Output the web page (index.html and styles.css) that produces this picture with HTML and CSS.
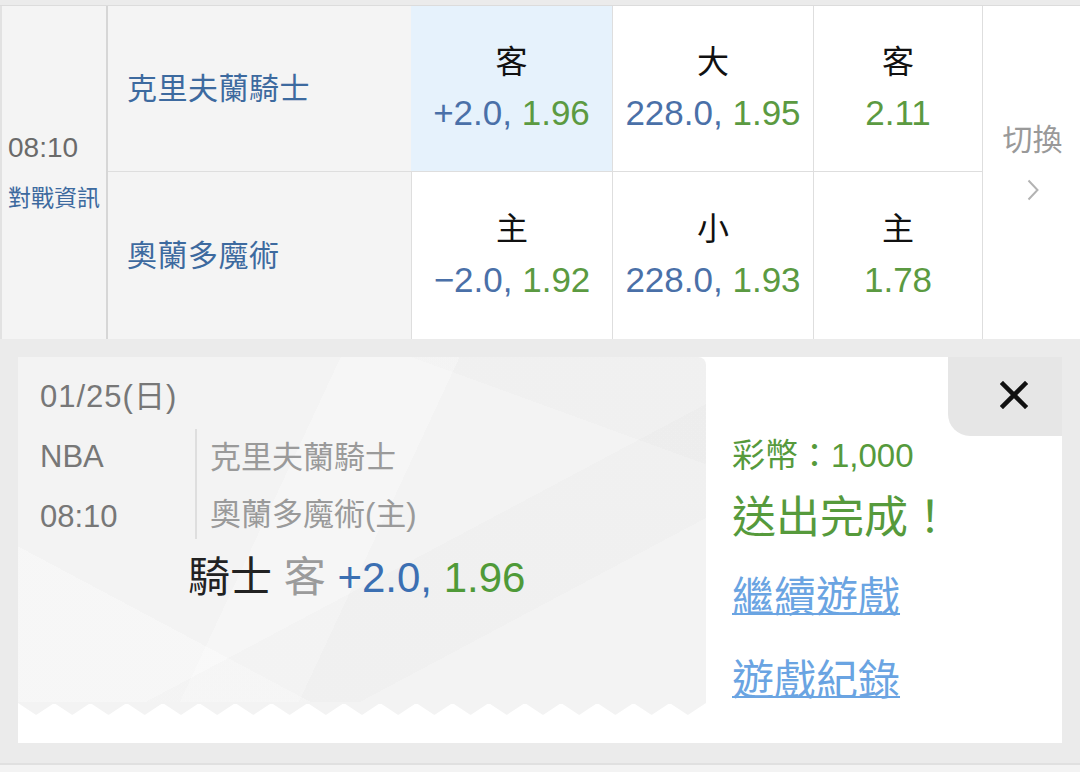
FILE: index.html
```html
<!DOCTYPE html>
<html lang="zh-Hant">
<head>
<meta charset="utf-8">
<title>投注完成</title>
<link rel="stylesheet" href="styles.css">
</head>
<body>
<div class="page">
  <div class="match">
    <div class="time-col">
      <div class="time">08:10</div>
      <div class="info">對戰資訊</div>
    </div>
    <div class="team team-top">克里夫蘭騎士</div>
    <div class="cell cell-top selected"><div class="lbl">客</div><div class="num"><span class="blue">+2.0,</span> <span class="green">1.96</span></div></div>
    <div class="cell cell-top"><div class="lbl">大</div><div class="num"><span class="blue">228.0,</span> <span class="green">1.95</span></div></div>
    <div class="cell cell-top"><div class="lbl">客</div><div class="num"><span class="green">2.11</span></div></div>
    <div class="switch">
      <div class="switch-text">切換</div>
      <svg class="chev" width="12" height="22" viewBox="0 0 12 22"><polyline points="1.5,1.5 10.5,11 1.5,20.5" fill="none" stroke="#b3b3b3" stroke-width="2"/></svg>
    </div>
    <div class="team">奧蘭多魔術</div>
    <div class="cell"><div class="lbl">主</div><div class="num"><span class="blue">−2.0,</span> <span class="green">1.92</span></div></div>
    <div class="cell"><div class="lbl">小</div><div class="num"><span class="blue">228.0,</span> <span class="green">1.93</span></div></div>
    <div class="cell"><div class="lbl">主</div><div class="num"><span class="green">1.78</span></div></div>
  </div>

  <div class="slip">
    <div class="ticket">
      <div class="ticket-body">
        <div class="date">01/25(日)</div>
        <div class="game">
          <div class="league">
            <div class="row-a">NBA</div>
            <div class="row-a">08:10</div>
          </div>
          <div class="vs">
            <div class="row-b">克里夫蘭騎士</div>
            <div class="row-b">奧蘭多魔術(主)</div>
          </div>
        </div>
        <div class="pick"><span class="pick-team">騎士</span> <span class="pick-side">客</span> <span class="pick-line">+2.0,</span> <span class="pick-odds">1.96</span></div>
      </div>
      <svg class="zigzag" width="688" height="13" viewBox="0 0 688 13" preserveAspectRatio="none"><polygon fill="#f3f3f3" stroke="#f3f3f3" stroke-width="1.5" stroke-linejoin="round" points="0,0 18.1,12 36.2,0 54.3,12 72.4,0 90.5,12 108.6,0 126.7,12 144.8,0 163,12 181.1,0 199.2,12 217.3,0 235.4,12 253.5,0 271.6,12 289.7,0 307.8,12 325.9,0 344,12 362.1,0 380.2,12 398.3,0 416.4,12 434.5,0 452.6,12 470.7,0 488.8,12 506.9,0 525,12 543.1,0 561.2,12 579.3,0 597.4,12 615.5,0 633.6,12 651.7,0 669.8,12 688,0"/></svg>
    </div>
    <div class="result">
      <div class="close-tab">
        <svg width="28" height="28" viewBox="0 0 28 28"><path d="M3 3 L25 25 M25 3 L3 25" stroke="#111" stroke-width="4.5" stroke-linecap="square" fill="none"/></svg>
      </div>
      <div class="result-body">
        <div class="coins">彩幣：1,000</div>
        <div class="done">送出完成！</div>
        <a class="link link-1" href="#">繼續遊戲</a>
        <a class="link link-2" href="#">遊戲紀錄</a>
      </div>
    </div>
  </div>
  <div class="next-row"></div>
</div>
</body>
</html>
```

FILE: styles.css
```css
* { box-sizing: border-box; }

html, body {
  margin: 0;
  padding: 0;
}

body {
  width: 1080px;
  height: 772px;
  overflow: hidden;
  background: #e6e6e6;
  font-family: "Liberation Sans", "Noto Sans CJK TC", sans-serif;
}

.page {
  padding-top: 5px;
  background: #ebebeb;
}

.match {
  display: grid;
  grid-template-columns: 108px 303px 201px 201px 169px 98px;
  grid-template-rows: 166px 167px;
  border-top: 1px solid #dcdcdc;
  background: #fff;
}

.time-col {
  grid-row: 1 / span 2;
  background: #f4f4f4;
  border-right: 2px solid #d6d6d6;
  border-left: 2px solid #e2e2e2;
  display: flex;
  flex-direction: column;
  justify-content: center;
  padding-left: 6px;
}

.time {
  font-size: 28px;
  line-height: 50px;
  color: #6a6a6a;
}

.info {
  font-size: 23px;
  line-height: 50px;
  color: #3d6a9f;
}

.team {
  background: #f4f4f4;
  display: flex;
  align-items: center;
  padding-left: 19px;
  padding-bottom: 6px;
  font-size: 30px;
  color: #3d6a9f;
  letter-spacing: 0.5px;
}

.team-top {
  border-bottom: 1px solid #dedede;
}

.cell {
  display: flex;
  flex-direction: column;
  align-items: center;
  justify-content: center;
  border-left: 1px solid #dedede;
  padding-bottom: 1px;
}

.cell-top {
  border-bottom: 1px solid #dedede;
}

.selected {
  background: #e6f2fc;
  border-left: 0;
}

.lbl {
  font-size: 32px;
  line-height: 48px;
  color: #111;
}

.num {
  font-size: 35px;
  line-height: 50px;
  padding-top: 2px;
}

.blue { color: #4a70a8; }
.green { color: #5b9a41; }

.switch {
  grid-column: 6;
  grid-row: 1 / span 2;
  border-left: 1px solid #dedede;
  background: #fff;
  display: flex;
  flex-direction: column;
  align-items: center;
  justify-content: center;
  padding-bottom: 25px;
  padding-left: 2px;
}

.switch-text {
  font-size: 30px;
  line-height: 40px;
  color: #999;
}

.chev {
  display: block;
  margin-top: 19px;
}

/* bet slip */
.slip {
  margin: 18px 18px 0;
  height: 386px;
  display: flex;
  background-color: #e6e6e6;
}

.ticket {
  width: 688px;
  display: flex;
  flex-direction: column;
  background: #fff;
}

.ticket-body {
  height: 346px;
  padding: 22px 0 0 22px;
  border-top-right-radius: 8px;
  background:
    linear-gradient(152deg, rgba(255,255,255,0) 58%, rgba(0,0,0,0.012) 58%, rgba(0,0,0,0.012) 74%, rgba(255,255,255,0) 74%),
    linear-gradient(28deg, rgba(255,255,255,0.3) 22%, rgba(255,255,255,0) 22%),
    linear-gradient(115deg, rgba(255,255,255,0) 38%, rgba(255,255,255,0.25) 38%, rgba(255,255,255,0.25) 52%, rgba(255,255,255,0) 52%),
    linear-gradient(200deg, rgba(0,0,0,0.01) 18%, rgba(255,255,255,0) 18%),
    #f3f3f3;
}

.zigzag {
  display: block;
  margin-top: -1px;
}

.date {
  font-size: 31px;
  line-height: 36px;
  color: #777;
  letter-spacing: 1px;
}

.game {
  display: flex;
  margin-top: 12px;
}

.league {
  width: 155px;
}

.row-a {
  font-size: 31px;
  line-height: 60px;
  color: #777;
}

.vs {
  border-left: 2px solid #dedede;
  padding-left: 13px;
  height: 110px;
  margin-top: 2px;
}

.row-b {
  font-size: 31px;
  line-height: 57px;
  color: #9a9a9a;
}

.pick {
  margin-top: 6px;
  padding-left: 148px;
  font-size: 42px;
  line-height: 50px;
  white-space: nowrap;
}

.pick-team { color: #222; }
.pick-side { color: #9b9b9b; }
.pick-line { color: #3b6fb2; }
.pick-odds { color: #4f9a38; }

.result {
  flex: 1;
  display: flex;
  flex-direction: column;
  background: #fff;
}

.close-tab {
  align-self: flex-end;
  width: 114px;
  height: 79px;
  background: #e6e6e6;
  border-bottom-left-radius: 22px;
  padding: 24px 0 0 52px;
}

.close-tab svg { display: block; }

.result-body {
  display: flex;
  flex-direction: column;
  align-items: flex-start;
  padding-left: 26px;
}

.coins {
  font-size: 33px;
  line-height: 40px;
  color: #569a3c;
}

.done {
  font-size: 44px;
  line-height: 56px;
  color: #569a3c;
  margin-top: 14px;
}

.link {
  font-size: 42px;
  line-height: 54px;
  color: #6aa4e2;
  text-decoration: underline;
  text-decoration-thickness: 2px;
  text-underline-offset: 1px;
}

.link-1 { margin-top: 25px; }
.link-2 { margin-top: 29px; }

.next-row {
  margin-top: 20px;
  height: 10px;
  border-top: 2px solid #e0e0e0;
  background: #f3f3f3;
}
```
